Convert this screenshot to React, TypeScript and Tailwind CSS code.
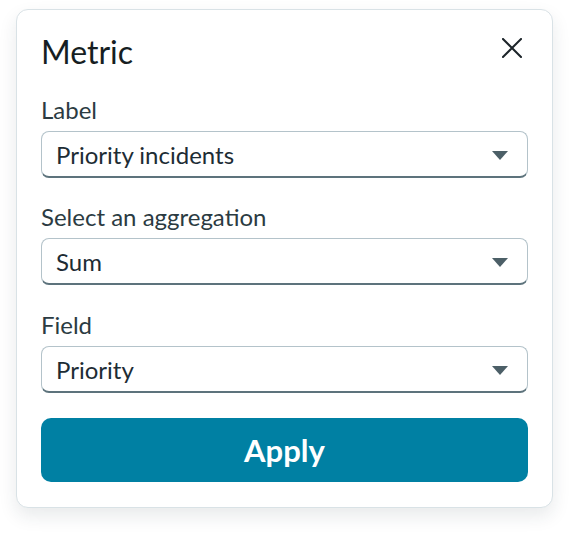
const FIELDS = [
  { label: "Label", value: "Priority incidents", gap: "mt-7" },
  { label: "Select an aggregation", value: "Sum", gap: "mt-[27px]" },
  { label: "Field", value: "Priority", gap: "mt-7" },
];

function SelectBox({ value }: { value: string }) {
  return (
    <div className="flex h-[47px] items-center justify-between rounded-lg border border-[#b4c3ca] border-b-2 border-b-[#5d737c] bg-white pl-[14px] pr-[19px]">
      <span className="pt-[2px] text-[24px] leading-7 text-[#1d2c34]">{value}</span>
      <svg width="16" height="9" viewBox="0 0 16 9" className="mt-[2px]">
        <path d="M0 0h16L8 9z" fill="#4c5f67" />
      </svg>
    </div>
  );
}

export default function App() {
  return (
    <div className="min-h-[534px] w-[570px] bg-white font-['Lato','Liberation_Sans',sans-serif]">
      <div className="ml-4 mt-[9px] w-[537px] rounded-xl border border-[#d9e2e6] bg-white px-6 pb-[25px] pt-6 shadow-[0_8px_18px_rgba(30,50,60,0.10)]">
        {/* header */}
        <div className="flex h-9 items-center justify-between">
          <h2 className="text-[32px] leading-9 text-[#161e22]">Metric</h2>
          <button className="mb-2 mr-[6px] text-[#1c2429]">
            <svg width="20" height="20" viewBox="0 0 20 20" className="block">
              <path d="M1 1L19 19M19 1L1 19" stroke="currentColor" strokeWidth="2" strokeLinecap="square" />
            </svg>
          </button>
        </div>

        {FIELDS.map((f) => (
          <div key={f.label} className={f.gap}>
            <div className="mb-[9px] text-[24px] leading-6 text-[#2b3b42]">{f.label}</div>
            <SelectBox value={f.value} />
          </div>
        ))}

        <button className="mt-[25px] flex h-16 w-full items-center justify-center rounded-[10px] bg-[#0080a3] text-[31px] font-bold text-white">
          Apply
        </button>
      </div>
    </div>
  );
}
